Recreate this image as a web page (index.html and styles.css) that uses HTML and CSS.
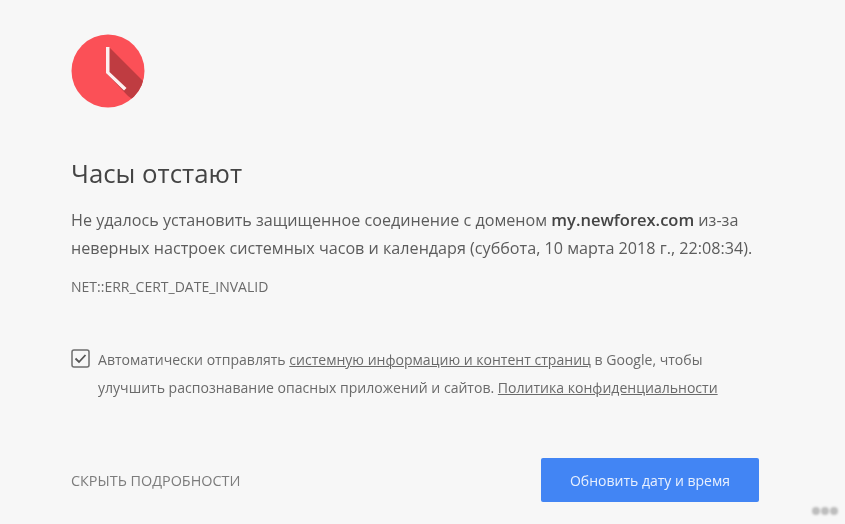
FILE: index.html
```html
<!DOCTYPE html>
<html lang="ru">
<head>
<meta charset="utf-8">
<title>Часы отстают</title>
<link rel="stylesheet" href="styles.css">
</head>
<body>
<main class="page">
  <svg class="clock" width="74" height="74" viewBox="0 0 74 74" aria-hidden="true">
    <defs><clipPath id="disc"><circle cx="37" cy="37" r="36.500"/></clipPath></defs>
    <circle cx="37" cy="37" r="36.500" fill="#fb5057"/>
    <path d="M38 13 L74 49 L74 74 L57 62 L36 40Z" fill="#bf3c41" clip-path="url(#disc)"/>
    <path d="M35 13h3.500v25l17 16-2.500 2.500-18-17.500z" fill="#fdf0f0"/>
  </svg>
  <h1 class="title">Часы отстают</h1>
  <p class="message">Не удалось установить защищенное соединение с доменом <strong>my.newforex.com</strong> из-за неверных настроек системных часов и календаря (суббота, 10 марта 2018 г., 22:08:34).</p>
  <p class="code">NET::ERR_CERT_DATE_INVALID</p>
  <div class="consent">
    <svg class="check" width="19" height="19" viewBox="0 0 19 19" aria-hidden="true">
      <rect x="1" y="1" width="17" height="17" rx="2" fill="none" stroke="#6f6f6f" stroke-width="1.500"/>
      <path d="M4.500 9.500l3.500 3.500 6.500-7" fill="none" stroke="#555" stroke-width="1.800"/>
    </svg>
    <p class="consent-text">Автоматически отправлять <a href="#">системную информацию и контент страниц</a> в Google, чтобы улучшить распознавание опасных приложений и сайтов. <a href="#">Политика конфиденциальности</a></p>
  </div>
  <div class="actions">
    <a class="details" href="#">СКРЫТЬ ПОДРОБНОСТИ</a>
    <button class="primary" type="button">Обновить дату и время</button>
  </div>
</main>
<div class="mark" aria-hidden="true"><span></span><span></span><span></span></div>
</body>
</html>
```
FILE: styles.css
```css
* { box-sizing: border-box; }
html, body { margin: 0; height: 100%; }
body {
  background: #f7f7f7;
  color: #646464;
  font-family: "Open Sans", "Noto Sans", sans-serif;
  overflow: hidden;
  position: relative;
}
.page {
  width: 845px;
  height: 524px;
  padding: 34px 86px 0 71px;
  filter: blur(0.3px);
}
.clock { display: block; }
.title {
  margin: 48px 0 0;
  font-size: 25.800px;
  line-height: 34px;
  font-weight: 400;
  color: #444;
}
.message {
  margin: 16px 0 0;
  font-size: 16.150px;
  line-height: 28px;
  width: 690px;
  color: #5c5c5c;
}
.message strong { font-size: 16.500px; font-weight: 600; color: #444; }
.code {
  margin: 15px 0 0;
  font-size: 14px;
  line-height: 20px;
  color: #6a6a6a;
}
.consent {
  display: flex;
  gap: 8px;
  margin-top: 49px;
}
.check { flex: none; margin-top: 3px; }
.consent-text {
  margin: 0;
  width: 640px;
  font-size: 14.050px;
  line-height: 28px;
  color: #6a6a6a;
}
.consent-text a { color: inherit; text-decoration: underline; }
.actions {
  display: flex;
  justify-content: space-between;
  align-items: center;
  margin-top: 56px;
}
.details {
  color: #7c7c7c;
  font-size: 14.400px;
  text-decoration: none;
}
.primary {
  width: 218px;
  height: 44px;
  border: 0;
  border-radius: 2px;
  background: #4285f4;
  color: #e8f0fe;
  font: 14px "Open Sans", "Noto Sans", sans-serif;
}
.mark {
  position: absolute;
  right: 7px;
  bottom: 9px;
  display: flex;
  gap: 1px;
  filter: blur(1px);
}
.mark span {
  width: 8px;
  height: 8px;
  border-radius: 50%;
  background: #bdbdbd;
}
```
